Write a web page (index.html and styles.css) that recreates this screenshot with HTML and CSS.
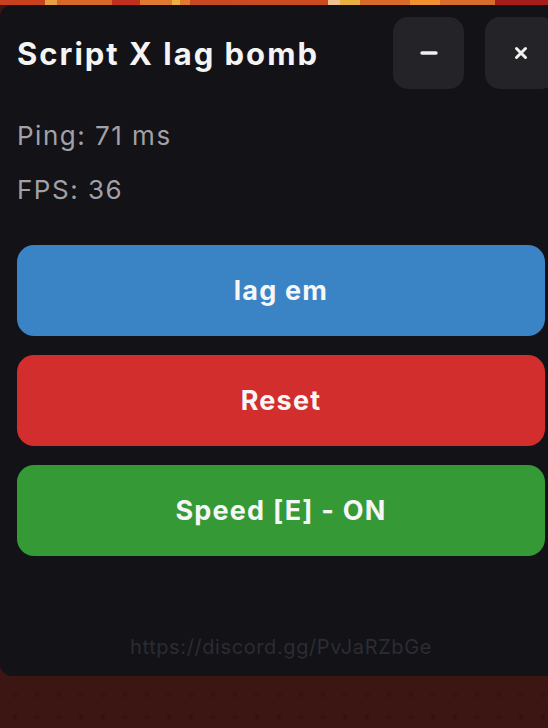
FILE: index.html
```html
<!DOCTYPE html>
<html>
<head>
    <title>Script X lag bomb</title>
    <link rel="stylesheet" href="styles.css">
</head>
<body>
    <div class="strip"></div>

    <div class="panel">
        <div class="header">
            <h1 class="title">Script X lag bomb</h1>
            <div class="window-buttons">
                <button class="win-btn" title="Minimize">
                    <svg width="18" height="6" viewBox="0 0 18 6"><line x1="2" y1="3" x2="16" y2="3" stroke="#f1f1f1" stroke-width="3.4" stroke-linecap="round"/></svg>
                </button>
                <button class="win-btn" title="Close">
                    <svg width="14" height="14" viewBox="0 0 14 14"><path d="M2.5 2.5 L11.5 11.5 M11.5 2.5 L2.5 11.5" stroke="#f1f1f1" stroke-width="3" stroke-linecap="round"/></svg>
                </button>
            </div>
        </div>

        <div class="stats">
            <div class="stat">Ping: 71 ms</div>
            <div class="stat">FPS: 36</div>
        </div>

        <div class="actions">
            <button class="action blue">lag em</button>
            <button class="action red">Reset</button>
            <button class="action green">Speed [E] - ON</button>
        </div>

        <div class="footer">https://discord.gg/PvJaRZbGe</div>
    </div>
</body>
</html>
```

FILE: styles.css
```css
body {
    margin: 0;
    overflow: hidden;
    height: 728px;
    font-family: Inter, "Noto Sans", sans-serif;
    background-color: #3c1613;
    background-image: radial-gradient(circle at 50% 50%, #361311 2px, transparent 3px);
    background-size: 22px 22px;
    background-position: 4px 2px;
}
.strip {
    height: 5px;
    background: linear-gradient(to right,
        #c8401e 0, #c8401e 45px,
        #e8a040 45px, #e8a040 57px,
        #d8682a 57px, #d8682a 112px,
        #c03020 112px, #c03020 140px,
        #e07a30 140px, #e07a30 172px,
        #f0b040 172px, #f0b040 180px,
        #e07a30 180px, #e07a30 190px,
        #c84a22 190px, #cc4a20 328px,
        #f0c090 328px, #f0c090 340px,
        #e8b040 340px, #e8b040 360px,
        #d86a2a 360px, #d86a2a 410px,
        #f09030 410px, #f09030 440px,
        #d86c2a 440px, #d86c2a 495px,
        #a81c1c 495px, #a81c1c 548px);
}
.panel {
    width: 528px;
    padding: 12px 17px 17px 17px;
    background: #121217;
    border-radius: 12px;
}
.header {
    display: flex;
    align-items: center;
    justify-content: space-between;
    height: 72px;
    margin-right: -11px;
}
.title {
    margin: 0;
    color: #f4f4f4;
    font-size: 31px;
    font-weight: 700;
    letter-spacing: 2px;
}
.window-buttons {
    display: flex;
    gap: 21px;
}
.win-btn {
    width: 71px;
    height: 72px;
    border: none;
    border-radius: 15px;
    background: #232328;
    display: flex;
    align-items: center;
    justify-content: center;
    cursor: pointer;
    padding: 0;
}
.stats {
    margin-top: 20px;
}
.stat {
    color: #a1a1a6;
    font-size: 26px;
    line-height: 54px;
    letter-spacing: 1.5px;
}
.actions {
    margin-top: 28px;
    display: flex;
    flex-direction: column;
    gap: 19px;
}
.action {
    height: 91px;
    border: none;
    border-radius: 17px;
    color: #f6f6f6;
    font-family: Inter, "Noto Sans", sans-serif;
    font-size: 27px;
    font-weight: 700;
    letter-spacing: 1.2px;
    cursor: pointer;
}
.blue {
    background: #3a83c5;
}
.red {
    background: #d22e2e;
}
.green {
    background: #359936;
}
.footer {
    margin-top: 79px;
    text-align: center;
    color: #2c2c33;
    font-size: 20px;
    line-height: 24px;
    letter-spacing: 0.6px;
}
```
